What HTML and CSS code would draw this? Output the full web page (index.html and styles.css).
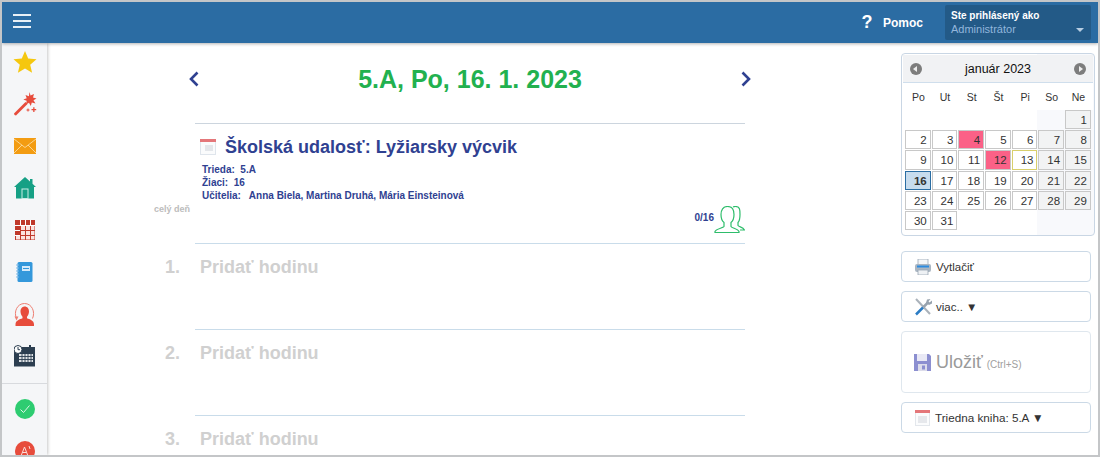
FILE: index.html
```html
<!DOCTYPE html>
<html lang="sk">
<head>
<meta charset="utf-8">
<title>Triedna kniha</title>
<link rel="stylesheet" href="styles.css">
</head>
<body>
<div class="app">
  <header class="topbar">
    <div class="burger"><span></span><span></span><span></span></div>
    <div class="help"><span class="q">?</span><span class="help-t">Pomoc</span></div>
    <div class="user">
      <div class="user-l">Ste prihlásený ako</div>
      <div class="user-n">Administrátor</div>
      <span class="user-c"></span>
    </div>
  </header>
  <div class="body">
    <nav class="side">
      <div class="si"><svg width="24" height="24" viewBox="0 0 24 24"><path fill="#f5c70f" d="M12 1l3.2 7.6 8.3.7-6.3 5.4 1.9 8.1L12 18.500l-7.100 4.300 1.900-8.100L.5 9.300l8.300-.7z"/></svg></div>
      <div class="si"><svg width="24" height="24" viewBox="0 0 24 24"><path fill="#e74c3c" d="M1 21.500L12.500 10l2 2L3 23.500q-2 0-2-2z"/><path fill="#e74c3c" d="M16.500 0l1 3.500L21 2l-1 3.500 3.500 1-3 1.800 2 3.200-3.700-1-1 3.500-1.800-3.200-3 1.700.7-3.700-3.400-1.300 3.400-1.200-1.200-3.300 3.400 1.300z"/><path fill="#e74c3c" d="M18.500 17h1.700v-1.700h1.300V17h1.700v1.300h-1.700V20h-1.300v-1.700h-1.700zM13.500 17.500h1v-1h1v1h1v1h-1v1h-1v-1h-1z"/></svg></div>
      <div class="si"><svg width="22" height="16" viewBox="0 0 22 16"><rect width="22" height="16" fill="#f39c12"/><path fill="none" stroke="#fde3b0" stroke-width=".8" d="M0 1l11 8.500L22 1M0 15l8-8M22 15l-8-8"/></svg></div>
      <div class="si"><svg width="22" height="22" viewBox="0 0 22 22"><path fill="#16a085" d="M11 0l5 4.500V2h2.500v4.800L22 10h-2v11.500H2V10H0z"/><rect x="8" y="12" width="6" height="9.500" fill="#16a085" stroke="#c8ece5"/></svg></div>
      <div class="si"><svg width="20" height="20" viewBox="0 0 20 20"><rect width="20" height="20" fill="#c0392b"/><path fill="#fbe3e0" d="M6 6h4v4H6zM11 6h4v4h-4zM16 6h3.500v4H16zM6 11h4v4H6zM11 11h4v4h-4zM16 11h3.500v4H16zM6 16h4v3.500H6zM11 16h4v3.500h-4zM16 16h3.500v3.500H16zM1 16h4v3.500H1z"/><path stroke="#fff" stroke-width="1" d="M0 5.500h20M0 10.500h5M0 15.500h5M5.500 0v5M10.500 0v5M15.500 0v5"/></svg></div>
      <div class="si"><svg width="17" height="20" viewBox="0 0 17 20"><rect x="1.500" y="0" width="15" height="20" rx="1.500" fill="#3498db"/><path stroke="#7db9e8" stroke-width="1" d="M0 3h3M0 6h3M0 9h3M0 12h3M0 15h3"/><rect x="6" y="4" width="8" height="5" fill="#d5eafa"/><path stroke="#3498db" d="M7 6.500h6"/></svg></div>
      <div class="si"><svg width="21" height="23" viewBox="0 0 21 23"><path fill="#e74c3c" d="M10.500 3.500c3 0 4.500 2.300 4.500 5 0 2.300-1 4-2 5.200v1.600c2.500 1 7 2 7 6.200v1.500H1.500v-1.500c0-4.200 4.500-5.200 7-6.200v-1.600c-1-1.200-2-2.900-2-5.200 0-2.700 1.500-5 4.500-5z"/><path fill="none" stroke="#ee7f73" d="M2.500 15.500C-.5 9 3 .5 10.500.5s11 8.500 8 15"/><path fill="#ee7f73" d="M.5 13.500h4l-2 4z"/></svg></div>
      <div class="si"><svg width="22" height="22" viewBox="0 0 22 22"><rect y="2" width="21" height="19.500" fill="#2c3e50"/><path fill="#fff" opacity=".85" d="M5 9h14v8H5z"/><path stroke="#2c3e50" stroke-width=".9" d="M5 11.500h14M5 14.500h14M8 9v8M11 9v8M14 9v8M17 9v8"/><circle cx="4" cy="4.500" r="4" fill="#fff" stroke="#2c3e50"/><path stroke="#2c3e50" fill="none" d="M4 2v2.700h2"/><rect x="15" y="0" width="2" height="4" fill="#2c3e50"/></svg></div>
      <div class="sep"></div>
      <div class="si si-c"><svg width="20" height="20" viewBox="0 0 20 20"><circle cx="10" cy="10" r="10" fill="#2ecc71"/><path fill="none" stroke="#dff7e8" stroke-width="1" d="M5.500 10.500l3 3 6-7"/></svg></div>
      <div class="si"><svg width="20" height="20" viewBox="0 0 20 20"><circle cx="10" cy="10" r="10" fill="#e74c3c"/><path fill="none" stroke="#fbdcd8" d="M6 15L9.500 6 13 15M7.500 11.500h4M14 5l1 3"/></svg></div>
    </nav>
    <main class="main">
      <div class="head">
        <svg class="arr" width="12" height="16" viewBox="0 0 12 16"><path fill="none" stroke="#2f4191" stroke-width="2.600" d="M9.500 1.500L3 8l6.500 6.500"/></svg>
        <h1 class="title">5.A, Po, 16. 1. 2023</h1>
        <svg class="arr" width="12" height="16" viewBox="0 0 12 16"><path fill="none" stroke="#2f4191" stroke-width="2.600" d="M2.500 1.500L9 8l-6.500 6.500"/></svg>
      </div>
      <div class="day">
        <div class="gut gut-allday">celý deň</div>
        <section class="event">
          <div class="ev-h">
            <svg width="16" height="16" viewBox="0 0 16 16"><rect width="16" height="16" fill="#dfe5ec"/><rect x="1" y="1" width="14" height="14" fill="#fafbfc"/><rect x="0" y="0" width="16" height="3" fill="#e4777a"/><path fill="#e3e6ea" d="M5 6h8v6H5z"/></svg>
            <h2 class="ev-t">Školská udalosť: Lyžiarsky výcvik</h2>
          </div>
          <div class="ev-m">Trieda:&nbsp; 5.A</div>
          <div class="ev-m">Žiaci:&nbsp; 16</div>
          <div class="ev-m">Učitelia:&nbsp;&nbsp; Anna Biela, Martina Druhá, Mária Einsteinová</div>
          <div class="ev-f">
            <span class="cnt">0/16</span>
            <svg width="31" height="27" viewBox="0 0 31 27"><path fill="none" stroke="#2ebd6b" stroke-width="1.200" d="M1 26.500v-1c1-2.500 8-3.500 9-5v-4c-2-1.500-3-4-3-8C7 4 9 .5 13.500.5S20 4 20 8.500c0 4-1 6.500-3 8v4c1 1.500 7 2.500 8 5v1zM19 .9c1-.4 1.500-.4 2.500-.4C26 .5 26 4 26 8.500c0 4-.5 6.500-2 8v3c1 1.500 5 1.500 6.500 4.500H26"/></svg>
          </div>
        </section>
        <div class="gut">1.</div><div class="hour">Pridať hodinu</div>
        <div class="gut">2.</div><div class="hour">Pridať hodinu</div>
        <div class="gut">3.</div><div class="hour">Pridať hodinu</div>
      </div>
    </main>
    <aside class="right">
      <div class="cal">
        <div class="cal-h">
          <span class="nav nav-l"></span>
          <span class="cal-t">január 2023</span>
          <span class="nav nav-r"></span>
        </div>
        <div class="dow"><span>Po</span><span>Ut</span><span>St</span><span>Št</span><span>Pi</span><span>So</span><span>Ne</span></div>
        <div class="grid">
          <i></i><i></i><i></i><i></i><i></i><i></i><b class="we">1</b>
          <b>2</b><b>3</b><b class="pink">4</b><b>5</b><b>6</b><b class="we">7</b><b class="we">8</b>
          <b>9</b><b>10</b><b>11</b><b class="pink">12</b><b class="now">13</b><b class="we">14</b><b class="we">15</b>
          <b class="sel">16</b><b>17</b><b>18</b><b>19</b><b>20</b><b class="we">21</b><b class="we">22</b>
          <b>23</b><b>24</b><b>25</b><b>26</b><b>27</b><b class="we">28</b><b class="we">29</b>
          <b>30</b><b>31</b>
        </div>
      </div>
      <div class="btn">
        <svg width="18" height="16" viewBox="0 0 18 16"><rect x="4" y="0" width="10" height="6" fill="#f4f6f8" stroke="#9aa7b4" stroke-width=".8"/><rect x="1" y="5" width="16" height="8" rx="2" fill="#aab6c2"/><rect x="3" y="6.500" width="12" height="2" fill="#2c8be0"/><rect x="4" y="11" width="10" height="5" fill="#eef1f4" stroke="#9aa7b4" stroke-width=".8"/></svg>
        <span>Vytlačiť</span>
      </div>
      <div class="btn">
        <svg width="18" height="18" viewBox="0 0 18 18"><path stroke="#aab2ba" stroke-width="2" d="M2 1l14 15"/><path stroke="#2b7cc4" stroke-width="2.500" d="M2 16.500l7-7"/><path stroke="#98a3ae" stroke-width="2.500" d="M9.500 9l5-5"/><path fill="#98a3ae" d="M13 1.500l3.500-.5-2 2.500 1 1 2.500-2 0 3-3 1.500-3-2z"/></svg>
        <span>viac.. ▼</span>
      </div>
      <div class="btn btn-save">
        <svg width="17" height="17" viewBox="0 0 17 17"><path fill="#8c8fd0" d="M0 0h15l2 2v15H0z"/><rect x="3" y="0" width="10" height="7" fill="#e9e9f5"/><rect x="4" y="10" width="9" height="7" fill="#dcdcea"/><rect x="8" y="11.500" width="3" height="4" fill="#8c8fd0"/></svg>
        <span class="save-t">Uložiť</span><span class="save-k">(Ctrl+S)</span>
      </div>
      <div class="btn btn-book">
        <svg width="15" height="16" viewBox="0 0 15 16"><rect width="15" height="16" fill="#e3e7ec"/><rect x="1" y="1" width="13" height="14" fill="#fbfcfd"/><rect width="15" height="3" fill="#e4777a"/><path fill="#e6e8ec" d="M3 6h9v7H3z"/></svg>
        <span>Triedna kniha: 5.A ▼</span>
      </div>
    </aside>
  </div>
</div>
</body>
</html>
```
FILE: styles.css
```css
* { box-sizing: border-box; }
html, body { margin: 0; padding: 0; height: 100%; overflow: hidden; }
body { font-family: "Liberation Sans", Arial, sans-serif; background: #fff; }
.app {
  width: 1100px; height: 457px; border: 2px solid #c4c6c8;
  display: flex; flex-direction: column; overflow: hidden;
}
.topbar {
  height: 41px; flex: none; background: #2b6ca3; display: flex; align-items: center;
  box-shadow: 0 1px 3px rgba(0,0,0,.3); position: relative; z-index: 2; padding-right: 7px;
}
.burger { margin: 0 0 4px 11px; width: 18px; display: flex; flex-direction: column; gap: 4px; }
.burger span { height: 2px; background: #e8f0f6; display: block; }
.help { margin-left: auto; display: flex; align-items: center; color: #fff; font-weight: bold; }
.q { font-size: 18px; width: 16px; margin-right: 8px; text-align: center; }
.help-t { font-size: 12px; }
.user {
  margin-left: 22px; width: 146px; height: 35px; background: #235a87; border-radius: 2px;
  padding: 4px 6px; position: relative;
}
.user-l { color: #fff; font-size: 10px; font-weight: bold; line-height: 13px; }
.user-n { color: #92b6dc; font-size: 11px; line-height: 15px; }
.user-c {
  position: absolute; right: 7px; top: 23px; width: 0; height: 0;
  border: 4px solid transparent; border-top-color: #b7cde2; border-bottom: 0;
}
.body { flex: 1; display: flex; min-height: 0; }
.side {
  width: 45px; flex: none; background: #f5f6f8; box-shadow: 1px 0 3px rgba(0,0,0,.22);
  display: flex; flex-direction: column; align-items: stretch; overflow: hidden;
}
.si { height: 42px; flex: none; display: flex; align-items: center; justify-content: center; padding-bottom: 4px; }
.si-c { margin-top: 6px; }
.sep { height: 1px; flex: none; background: #d8dade; margin-top: 4px; }
.main { width: 854px; flex: none; min-width: 0; overflow: hidden; }
.head {
  width: 564px; margin: 10px 0 0 141px; height: 52px; display: flex; align-items: center;
  justify-content: space-between;
}
.arr { flex: none; }
.title { margin: 0; font-size: 25px; font-weight: bold; color: #22b14f; line-height: 40px; }
.day { display: grid; grid-template-columns: 148px 550px; margin-top: 18px; }
.gut {
  text-align: right; padding: 14px 15px 0 0; font-size: 18px; font-weight: bold; color: #d0d0d0;
}
.gut-allday { font-size: 9px; color: #bcbcbc; padding: 81px 5px 0 0; }
.event { border-top: 1px solid #ccd5de; height: 120px; padding: 13px 0 0 5px; position: relative; }
.ev-h { display: flex; align-items: center; gap: 9px; margin-bottom: 6px; }
.ev-t { margin: 0; font-size: 18px; font-weight: bold; color: #2f4191; line-height: 20px; }
.ev-m { font-size: 10px; line-height: 13px; color: #2f4191; padding-left: 2px; font-weight: bold; }
.ev-f { position: absolute; right: 0; bottom: 10px; display: flex; align-items: center; }
.cnt { font-size: 10px; font-weight: bold; color: #2f4191; margin-bottom: 4px; }
.hour {
  border-top: 1px solid #c9dcea; height: 86px; padding: 13px 0 0 5px; font-size: 18px;
  font-weight: bold; color: #d0d0d0;
}
.right { width: 194px; flex: none; display: flex; flex-direction: column; align-items: flex-start; padding-top: 10px; }
.cal {
  width: 194px; height: 183px; flex: none; border: 1px solid #c9d6e4; border-radius: 4px; padding: 1px;
  background: linear-gradient(to right, #fff 135px, #f8f9fc 135px); margin-bottom: 15px;
}
.cal-h {
  height: 28px; background: #f1f2f4; border-bottom: 1px solid #cfdeec; display: flex;
  align-items: center; justify-content: space-between; padding: 0 7px;
}
.cal-t { font-size: 12.500px; color: #111; }
.nav { width: 12px; height: 12px; border-radius: 50%; background: #7d7d7d; position: relative; }
.nav::after { content: ""; position: absolute; top: 3px; border: 3px solid transparent; }
.nav-l::after { left: 0; border-right: 4px solid #eee; border-left: 0; margin-left: 3px; }
.nav-r::after { right: 0; border-left: 4px solid #eee; border-right: 0; margin-right: 3px; }
.dow {
  display: grid; grid-template-columns: repeat(7, 26.7px); height: 27px; align-items: center;
  font-size: 10.500px; color: #333; text-align: center; padding-left: 2px; background: #fff;
}
.grid {
  display: grid; grid-template-columns: repeat(7, 26.7px); grid-auto-rows: 20.2px; padding-left: 2px;
}
.grid i { display: block; }
.grid b {
  font-weight: normal; font-size: 11.500px; color: #333; text-align: right; padding: 2px 3px 0 0;
  border: 1px solid #c8c8c8; background: #fff; margin: 0 1px 1px 0; line-height: 15px;
}
.grid b.we { background: #f2f3f4; }
.grid b.pink { background: #fb6187; }
.grid b.now { border-color: #d8cf6c; }
.grid b.sel { background: #c7dcee; border: 1px solid #2a6da3; font-weight: bold; }
.btn {
  width: 190px; height: 31px; border: 1px solid #cbd9e6; border-radius: 4px; margin-bottom: 9px;
  display: flex; align-items: center; gap: 4px; padding-left: 12px; font-size: 11.500px; color: #333;
  flex: none;
}
.btn-save { height: 62px; border-color: #dfe7ee; }
.btn-book { font-size: 11.700px; gap: 5px; }
.btn-book svg { margin-left: 1px; }
.save-t { font-size: 18px; color: #9a9a9a; margin-left: 1px; }
.save-k { font-size: 10px; color: #a0a0a0; margin-top: 4px; }
```
